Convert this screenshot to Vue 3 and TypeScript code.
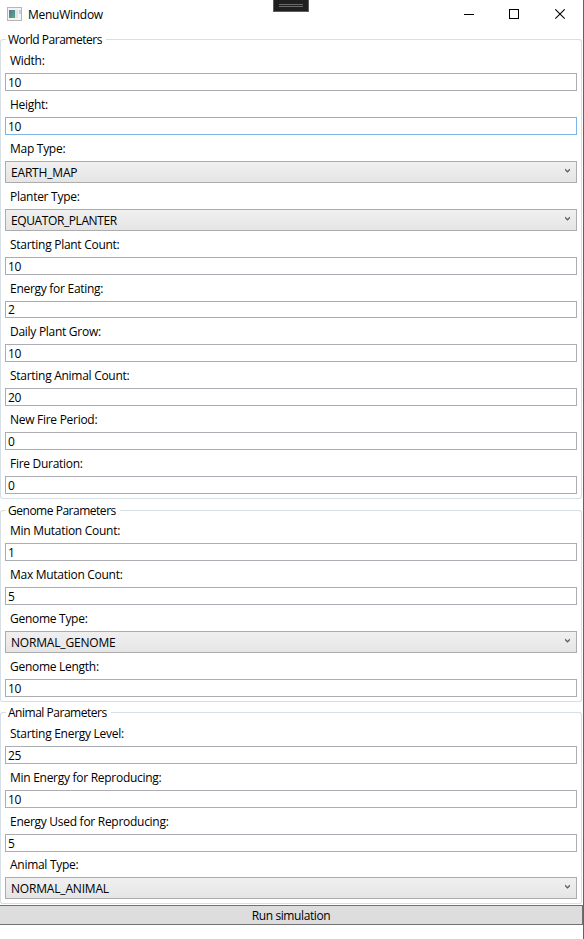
<script setup lang="ts">
interface Field {
  label: string
  value: string
  kind?: 'text' | 'combo'
  focused?: boolean
  short?: boolean
  tight?: boolean
  condensed?: boolean
}

interface Group {
  title: string
  fields: Field[]
}

const groups: Group[] = [
  {
    title: 'World Parameters',
    fields: [
      { label: 'Width:', value: '10' },
      { label: 'Height:', value: '10', focused: true },
      { label: 'Map Type:', value: 'EARTH_MAP', kind: 'combo' },
      { label: 'Planter Type:', value: 'EQUATOR_PLANTER', kind: 'combo', condensed: true },
      { label: 'Starting Plant Count:', value: '10' },
      { label: 'Energy for Eating:', value: '2', short: true },
      { label: 'Daily Plant Grow:', value: '10' },
      { label: 'Starting Animal Count:', value: '20' },
      { label: 'New Fire Period:', value: '0' },
      { label: 'Fire Duration:', value: '0' },
    ],
  },
  {
    title: 'Genome Parameters',
    fields: [
      { label: 'Min Mutation Count:', value: '1', tight: true },
      { label: 'Max Mutation Count:', value: '5' },
      { label: 'Genome Type:', value: 'NORMAL_GENOME', kind: 'combo' },
      { label: 'Genome Length:', value: '10' },
    ],
  },
  {
    title: 'Animal Parameters',
    fields: [
      { label: 'Starting Energy Level:', value: '25' },
      { label: 'Min Energy for Reproducing:', value: '10' },
      { label: 'Energy Used for Reproducing:', value: '5' },
      { label: 'Animal Type:', value: 'NORMAL_ANIMAL', kind: 'combo', tight: true },
    ],
  },
]
</script>

<template>
  <div class="window">
    <header class="titlebar">
      <svg class="app-icon" width="16" height="14" viewBox="0 0 16 14" shape-rendering="crispEdges">
        <defs>
          <linearGradient id="pane" x1="0" y1="0" x2="1" y2="1">
            <stop offset="0" stop-color="#4a78a0" />
            <stop offset="1" stop-color="#5fa683" />
          </linearGradient>
        </defs>
        <rect x="0.5" y="0.5" width="14" height="13" fill="#f4f4f4" stroke="#b4b6b8" />
        <rect x="2" y="3" width="6" height="8" fill="url(#pane)" />
        <rect x="8" y="3" width="3" height="8" fill="#dfe3e8" />
        <rect x="12" y="3" width="2" height="4" fill="#c9ced6" />
      </svg>
      <span class="title">MenuWindow</span>
      <svg class="controls" width="104" height="12" viewBox="0 0 104 12">
        <path d="M0 5.5H10" stroke="#000" fill="none" />
        <rect x="45.5" y="0.5" width="9" height="9" stroke="#000" fill="none" />
        <path d="M91.3 0.3L100.7 9.7M100.7 0.3L91.3 9.7" stroke="#000" stroke-width="1.05" fill="none" />
      </svg>
      <div class="grip"><i></i><i></i></div>
    </header>

    <section v-for="g in groups" :key="g.title" class="group">
      <div class="legend"><span class="stub"></span><span class="name">{{ g.title }}</span><span class="rule"></span></div>
      <div class="fields">
        <template v-for="f in g.fields" :key="f.label">
          <div class="label" :class="{ tight: f.tight }">{{ f.label }}</div>
          <div v-if="f.kind === 'combo'" class="combo" :class="{ condensed: f.condensed }">
            <span>{{ f.value }}</span>
            <svg width="5" height="5" viewBox="0 0 5 5">
              <path d="M0 0.4L2.5 2.8L5 0.4V2.2L2.5 4.8L0 2.2Z" fill="#606060" />
            </svg>
          </div>
          <div v-else class="input" :class="{ focused: f.focused, short: f.short }">{{ f.value }}</div>
        </template>
      </div>
    </section>

    <button class="run" type="button">Run simulation</button>
  </div>
</template>

<style>
body {
  margin: 0;
  background: #fff;
}
</style>

<style scoped>
.window {
  box-sizing: border-box;
  width: 584px;
  height: 939px;
  border-right: 1px solid #66635f;
  background: #fff;
  color: #000;
  font: 12px/17px "Open Sans", "Noto Sans", sans-serif;
  letter-spacing: -0.28px;
  overflow: hidden;
  white-space: nowrap;
}
.titlebar {
  position: relative;
  display: flex;
  height: 31px;
}
.app-icon {
  margin: 7px 5px 0 7px;
}
.title {
  margin-top: 6px;
  letter-spacing: -0.27px;
}
.controls {
  margin: 9px 15px 0 auto;
}
.grip {
  position: absolute;
  left: 273px;
  top: 0;
  box-sizing: border-box;
  width: 36px;
  height: 12px;
  padding: 4px 5px 0;
  border: 1px solid #605d5d;
  border-top: 0;
  background: #1f1f1f;
}
.grip i {
  display: block;
  height: 1px;
  margin-bottom: 1px;
  background: #6b6b6b;
}
.group {
  width: 582px;
}
.group + .group {
  margin-top: 3px;
}
.group + .group + .group {
  margin-top: 2px;
}
.legend {
  display: flex;
  height: 16px;
}
.stub,
.rule {
  box-sizing: border-box;
  height: 8px;
  margin-top: 8px;
  border-top: 1px solid #d5dfe5;
}
.stub {
  width: 6px;
  border-left: 1px solid #d5dfe5;
  border-top-left-radius: 3px;
}
.rule {
  flex: 1;
  border-right: 1px solid #d5dfe5;
  border-top-right-radius: 3px;
}
.name {
  padding: 0 4px 0 2px;
  letter-spacing: -0.48px;
}
.fields {
  padding: 0 4px 4px;
  border: 1px solid #d5dfe5;
  border-top: 0;
  border-radius: 0 0 3px 3px;
}
.label {
  height: 26px;
  padding-left: 5px;
  box-sizing: border-box;
  padding-top: 5px;
}
.label.tight {
  height: 25px;
  padding-top: 4px;
}
.input,
.combo {
  box-sizing: border-box;
  border: 1px solid #abadb3;
}
.input {
  height: 18px;
  padding-left: 2px;
}
.input.short {
  height: 17px;
  line-height: 16px;
}
.input.focused {
  border-color: #7eb4ea;
}
.combo {
  display: flex;
  height: 22px;
  padding: 0 6px 0 5px;
  border-color: #acacac;
  background: linear-gradient(#f0f0f0, #e5e5e5);
  line-height: 21px;
  letter-spacing: -0.18px;
}
.combo.condensed {
  letter-spacing: -0.4px;
}
.combo svg {
  margin: 6px 0 0 auto;
}
.run {
  display: block;
  box-sizing: border-box;
  width: 584px;
  height: 20px;
  margin: 1px 0 0 -1px;
  padding: 1px 0 0;
  border: 1px solid #707070;
  background: #ddd;
  color: #000;
  font: inherit;
  letter-spacing: -0.4px;
  line-height: 17px;
}
</style>
